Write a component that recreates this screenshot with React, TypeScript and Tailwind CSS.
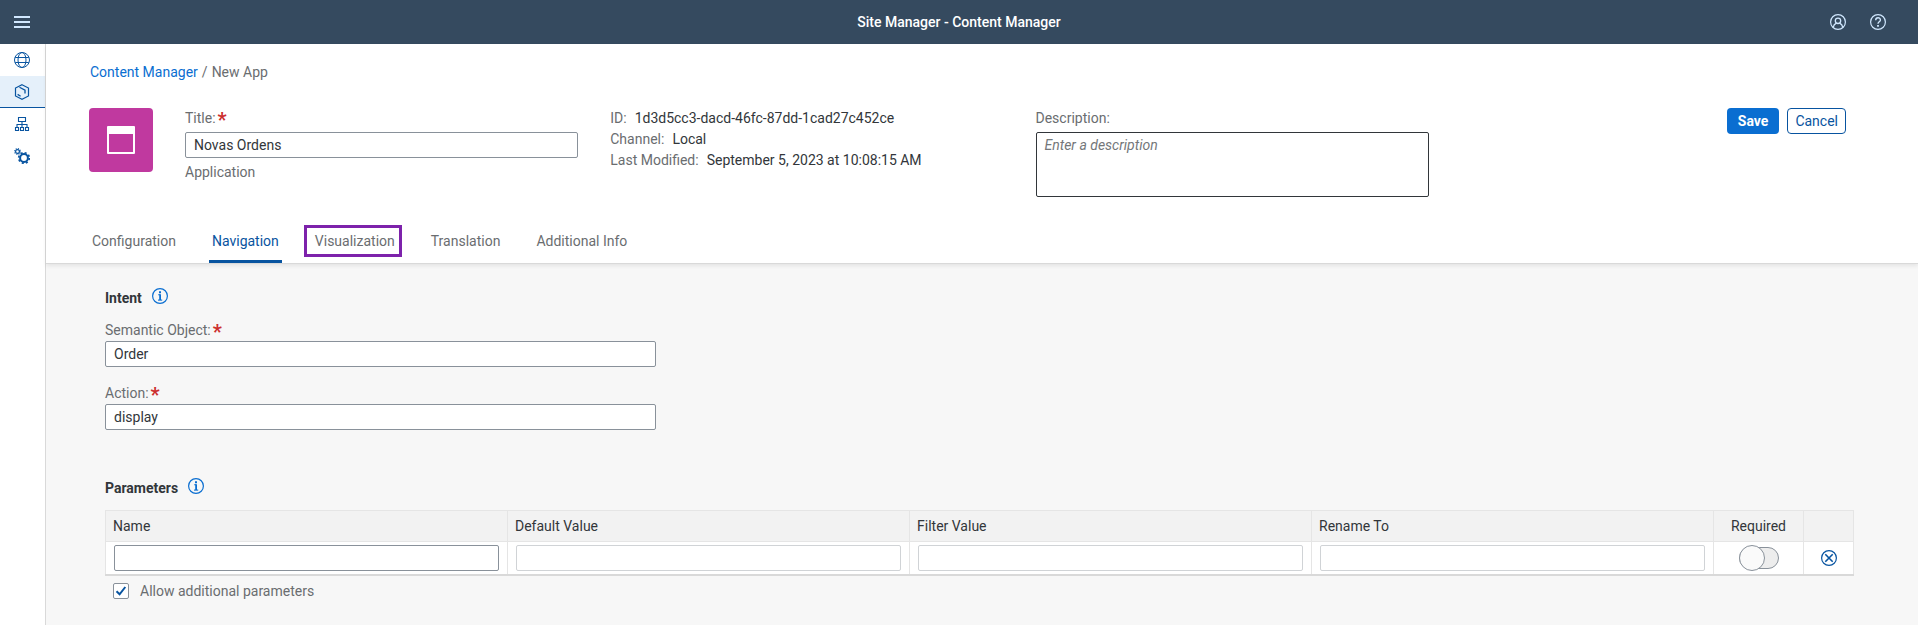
import type { ReactNode } from 'react';

function Icon({ children, className = '' }: { children: ReactNode; className?: string }) {
  return (
    <svg
      viewBox="0 0 16 16"
      fill="none"
      stroke="currentColor"
      strokeWidth="1"
      aria-hidden="true"
      className={`block size-4 shrink-0 ${className}`}
    >
      {children}
    </svg>
  );
}

const MenuIcon = () => (
  <Icon>
    <path d="M0 3h16M0 8h16M0 13h16" strokeWidth="2" />
  </Icon>
);

const UserIcon = () => (
  <Icon>
    <circle cx="8" cy="8" r="7.4" strokeWidth="1.2" />
    <circle cx="8" cy="6.8" r="2.7" strokeWidth="1.3" />
    <path d="M3.2 13.4C3.6 11 4.800 9.900 6.400 9.200M12.8 13.4C12.4 11 11.200 9.900 9.600 9.200" strokeWidth="1.3" />
  </Icon>
);

const HelpIcon = () => (
  <Icon>
    <circle cx="8" cy="8" r="7.4" strokeWidth="1.2" />
    <path d="M5.7 6.2C5.7 3 10.4 3.1 10.4 5.9 10.4 7.8 8 7.8 8 9.8" strokeWidth="1.4" />
    <path d="M8 11v1.7" strokeWidth="1.8" />
  </Icon>
);

const GlobeIcon = () => (
  <Icon>
    <circle cx="8" cy="8" r="7.5" />
    <ellipse cx="8" cy="8" rx="4" ry="7.5" />
    <path d="M1.2 5.5h13.6M1.2 10.5h13.6" />
  </Icon>
);

const ContentIcon = () => (
  <Icon>
    <path d="M8 .7 14.5 4v8L8 15.3 1.5 12V4Z" strokeWidth="1.2" />
    <path d="M5.500 3.200 11 6.200V9.500M3.600 10.400 6.600 12.200" strokeWidth="1.300" />
  </Icon>
);

const TreeIcon = () => (
  <Icon>
    <path
      d="M4.5 1.5h7v4h-7ZM8 5.5v6M3 11.500V8.500h10V11.500M1.500 11.500h3v3h-3ZM6.500 11.500h3v3h-3ZM11.500 11.500h3v3h-3Z"
      strokeWidth="1.1"
    />
  </Icon>
);

const GearsIcon = () => (
  <Icon>
    <circle cx="10" cy="10" r="3.9" strokeWidth="2" />
    <circle cx="10" cy="10" r="5.300" strokeWidth="1.7" strokeDasharray="2.080 2.080" />
    <circle cx="3.500" cy="3.500" r="1.900" strokeWidth="1.200" />
    <circle cx="3.500" cy="3.500" r="2.800" strokeWidth="1.200" strokeDasharray="1.100 1.100" />
  </Icon>
);

const InfoIcon = () => (
  <Icon className="text-[#0a6ed1]">
    <circle cx="8" cy="8" r="7.4" strokeWidth="1.2" />
    <path d="M8 3.200v2" strokeWidth="2" />
    <path d="M6.200 6.700H8" strokeWidth="1.100" />
    <path d="M8.100 6.200V12" strokeWidth="1.800" />
    <path d="M6 12.100h4.200" strokeWidth="1.100" />
  </Icon>
);

const DeclineIcon = () => (
  <Icon>
    <circle cx="8" cy="8" r="7.4" strokeWidth="1.2" />
    <path d="M4.300 4.300l7.400 7.400M11.700 4.300l-7.400 7.400" strokeWidth="1.600" />
  </Icon>
);

function Label({ id, required, children }: { id: string; required?: boolean; children: ReactNode }) {
  return (
    <label htmlFor={id} className="flex h-5 items-center gap-0.5 text-[#6a6d70]">
      {children}
      {required && <span className="h-5 text-xl leading-6 font-bold text-[#cc2f2f]">*</span>}
    </label>
  );
}

const inputBase = 'block h-[26px] w-full rounded-xs border bg-white px-2 text-sm text-[#32363a]';

const navItems = [
  { label: 'Site Directory', icon: <GlobeIcon /> },
  { label: 'Content Manager', icon: <ContentIcon />, active: true },
  { label: 'Channel Manager', icon: <TreeIcon /> },
  { label: 'Settings', icon: <GearsIcon /> },
];

const tabs = ['Configuration', 'Navigation', 'Visualization', 'Translation', 'Additional Info'];

const details = [
  ['ID:', '1d3d5cc3-dacd-46fc-87dd-1cad27c452ce'],
  ['Channel:', 'Local'],
  ['Last Modified:', 'September 5, 2023 at 10:08:15 AM'],
];

const columns = ['Name', 'Default Value', 'Filter Value', 'Rename To'];

function SectionTitle({ children }: { children: ReactNode }) {
  return (
    <div className="flex h-5 items-start gap-2.5">
      <h2 className="leading-5 font-bold">{children}</h2>
      <InfoIcon />
    </div>
  );
}

function ShellBar() {
  return (
    <header className="grid h-11 grid-cols-[1fr_auto_1fr] items-center bg-[#354a5f] text-[#d1e8ff]">
      <div className="flex pl-3.5">
        <button type="button" aria-label="Menu">
          <MenuIcon />
        </button>
      </div>
      <h1 className="font-medium text-white">Site Manager - Content Manager</h1>
      <div className="flex justify-end gap-6 pr-8">
        <button type="button" aria-label="User">
          <UserIcon />
        </button>
        <button type="button" aria-label="Help">
          <HelpIcon />
        </button>
      </div>
    </header>
  );
}

function SideNav() {
  return (
    <nav className="w-[46px] shrink-0 border-r border-[#d9d9d9] bg-white text-[#0854a0]">
      {navItems.map((item) => (
        <a
          key={item.label}
          href="#"
          aria-label={item.label}
          className={`flex h-8 items-center border-b pl-3.5 ${
            item.active ? 'border-[#0854a0] bg-[#e5f0fa]' : 'border-transparent'
          }`}
        >
          {item.icon}
        </a>
      ))}
    </nav>
  );
}

function ObjectHeader() {
  return (
    <div className="relative border-b border-[#d9d9d9] bg-white pr-16 pl-[43px] shadow-[0_2px_4px_rgba(0,0,0,0.08)]">
      <nav className="flex gap-1 pt-[18px] pl-px leading-5">
        <a href="#" className="text-[#0a6ed1]">
          Content Manager
        </a>
        <span className="text-[#6a6d70]">/</span>
        <span className="text-[#6a6d70]">New App</span>
      </nav>

      <div className="flex gap-8 pt-[26px]">
        <div className="flex size-16 shrink-0 items-center justify-center rounded bg-[#c0399f]">
          <svg viewBox="0 0 28 28" className="size-7" aria-hidden="true">
            <path
              fill="#fff"
              fillRule="evenodd"
              d="M1 0h26a1 1 0 0 1 1 1v26a1 1 0 0 1-1 1H1a1 1 0 0 1-1-1V1a1 1 0 0 1 1-1ZM2 8v18h24V8Z"
            />
          </svg>
        </div>
        <div className="grid flex-1 grid-cols-4 gap-8">
          <div>
            <Label id="title" required>
              Title:
            </Label>
            <input id="title" defaultValue="Novas Ordens" className={`${inputBase} mt-1 border-[#89919a]`} />
            <p className="mt-1 leading-5 text-[#6a6d70]">Application</p>
          </div>
          <dl>
            {details.map(([term, value]) => (
              <div key={term} className="flex gap-2 leading-[21px]">
                <dt className="text-[#6a6d70]">{term}</dt>
                <dd>{value}</dd>
              </div>
            ))}
          </dl>
          <div>
            <Label id="description">Description:</Label>
            <textarea
              id="description"
              placeholder="Enter a description"
              className="mt-1 block h-[65px] w-full resize-none rounded-xs border border-[#32363a] bg-white px-2 py-0.5 text-sm placeholder:text-[#74777a] placeholder:italic"
            />
          </div>
          <div className="flex items-start justify-end gap-2 pr-2">
            <button type="button" className="h-[26px] rounded bg-[#0a6ed1] px-[11px] font-bold text-white">
              Save
            </button>
            <button
              type="button"
              className="h-[26px] rounded border border-[#0854a0] bg-white px-[7px] text-[#0854a0]"
            >
              Cancel
            </button>
          </div>
        </div>
      </div>

      <nav className="mt-5 flex gap-[30px]">
        {tabs.map((tab) => (
          <a
            key={tab}
            href="#"
            className={`relative border-b-3 px-[3px] pt-3.5 pb-[9px] leading-5 ${
              tab === 'Navigation' ? 'border-[#0854a0] text-[#0854a0]' : 'border-transparent text-[#6a6d70]'
            }`}
          >
            {tab}
            {tab === 'Visualization' && (
              <span className="absolute top-2 -right-1 bottom-[3px] -left-2 border-3 border-[#7d22ab]" />
            )}
          </a>
        ))}
      </nav>
    </div>
  );
}

function ParametersTable() {
  return (
    <table className="w-full table-fixed border-collapse border border-b-2 border-[#e5e5e5] border-b-[#d9d9d9] bg-white">
      <thead>
        <tr className="h-[31px] bg-[#f2f2f2]">
          {columns.map((column) => (
            <th key={column} className="border border-[#e5e5e5] px-[7px] text-left font-normal">
              {column}
            </th>
          ))}
          <th className="w-[90px] border border-[#e5e5e5] text-center font-normal">Required</th>
          <th className="w-[50px] border border-[#e5e5e5]" aria-label="Delete" />
        </tr>
      </thead>
      <tbody>
        <tr className="h-[33px]">
          {columns.map((column, index) => (
            <td key={column} className="border border-[#e5e5e5] px-2">
              <input
                aria-label={column}
                disabled={index > 0}
                className={`${inputBase} ${index === 0 ? 'border-[#89919a]' : 'border-[#d0d3d6]'}`}
              />
            </td>
          ))}
          <td className="border border-[#e5e5e5]">
            <button
              type="button"
              role="switch"
              aria-checked="false"
              aria-label="Required"
              className="mx-auto flex h-[26px] w-10 items-center"
            >
              <span className="flex h-[22px] w-full items-center rounded-full border border-[#89919a] bg-[#ededed]">
                <span className="-ml-px size-[26px] shrink-0 rounded-full border border-[#89919a] bg-[#fafafa]" />
              </span>
            </button>
          </td>
          <td className="border border-[#e5e5e5]">
            <button type="button" aria-label="Delete parameter" className="mx-auto block text-[#0854a0]">
              <DeclineIcon />
            </button>
          </td>
        </tr>
      </tbody>
    </table>
  );
}

export default function App() {
  return (
    <div className="flex min-h-screen flex-col bg-[#f7f7f7] font-[Roboto,'Liberation_Sans',sans-serif] text-sm text-[#32363a]">
      <ShellBar />
      <div className="flex flex-1">
        <SideNav />
        <main className="min-w-0 flex-1">
          <ObjectHeader />
          <div className="pt-6 pr-16 pl-[59px]">
            <section>
              <SectionTitle>Intent</SectionTitle>
              <div className="w-[551px] max-w-full pt-3">
                <Label id="semantic-object" required>
                  Semantic Object:
                </Label>
                <input id="semantic-object" defaultValue="Order" className={`${inputBase} mt-px border-[#89919a]`} />
              </div>
              <div className="w-[551px] max-w-full pt-4">
                <Label id="action" required>
                  Action:
                </Label>
                <input id="action" defaultValue="display" className={`${inputBase} mt-px border-[#89919a]`} />
              </div>
            </section>
            <section className="pt-12">
              <SectionTitle>Parameters</SectionTitle>
              <div className="pt-3">
                <ParametersTable />
              </div>
              <label className="flex items-center gap-[11px] pt-[5px] pl-2 text-[#6a6d70]">
                <span className="relative flex size-4">
                  <input
                    type="checkbox"
                    defaultChecked
                    className="peer size-4 appearance-none rounded-xs border border-[#89919a] bg-white"
                  />
                  <svg
                    viewBox="0 0 16 16"
                    fill="none"
                    stroke="#0854a0"
                    strokeWidth="2"
                    aria-hidden="true"
                    className="pointer-events-none invisible absolute inset-0 size-4 peer-checked:visible"
                  >
                    <path d="M3.500 8.300 6.600 11.300 12.300 4" />
                  </svg>
                </span>
                Allow additional parameters
              </label>
            </section>
          </div>
        </main>
      </div>
    </div>
  );
}
